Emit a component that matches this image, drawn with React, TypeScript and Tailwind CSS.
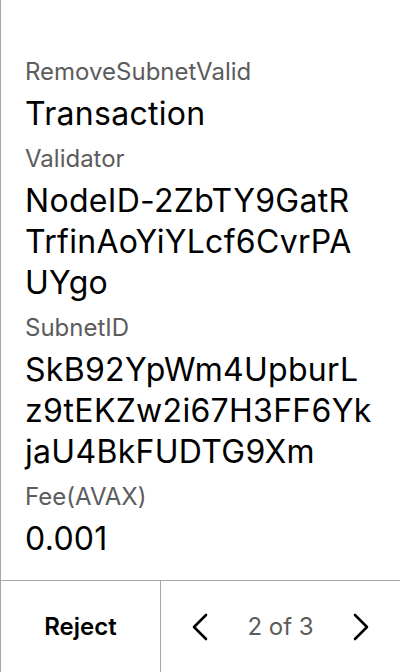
import React from "react";

const fields = [
    { label: "Validator", lines: ["NodeID-2ZbTY9GatR", "TrfinAoYiYLcf6CvrPA", "UYgo"] },
    { label: "SubnetID", lines: ["SkB92YpWm4UpburL", "z9tEKZw2i67H3FF6Yk", "jaU4BkFUDTG9Xm"] },
    { label: "Fee(AVAX)", lines: ["0.001"] },
];

function Chevron({ dir }: { dir: "left" | "right" }) {
    return (
        <svg width="16" height="28" viewBox="0 0 16 28" fill="none" stroke="black" strokeWidth="2.6" strokeLinecap="round" strokeLinejoin="round">
            {dir === "left" ? <polyline points="14,2 2,14 14,26" /> : <polyline points="2,2 14,14 2,26" />}
        </svg>
    );
}

export default function App() {
    return (
        <div className="h-[672px] w-[400px] flex flex-col bg-white border-l border-[#a6a6a6] font-['Inter',sans-serif]">
            <div className="flex-1 pl-6 pr-4 pt-[57px]">
                <div className="text-[24px] leading-[30px] text-[#5c5c5c]">RemoveSubnetValid</div>
                <div className="text-[32px] leading-[41px] tracking-[0.3px] text-black mt-[6px]">Transaction</div>
                {fields.map((f) => (
                    <div key={f.label} className="mt-[10px]">
                        <div className="text-[24px] leading-[30px] text-[#5c5c5c]">{f.label}</div>
                        <div className="mt-[6px]">
                            {f.lines.map((line) => (
                                <div key={line} className="text-[32px] leading-[41px] tracking-[0.3px] text-black whitespace-nowrap">
                                    {line}
                                </div>
                            ))}
                        </div>
                    </div>
                ))}
            </div>
            <div className="h-[92px] flex border-t border-[#a6a6a6]">
                <button className="w-[160px] border-r border-[#a6a6a6] text-[24px] font-semibold text-black">
                    Reject
                </button>
                <div className="flex-1 flex items-center justify-between pl-[31px] pr-[31px]">
                    <Chevron dir="left" />
                    <span className="text-[24px] text-[#5c5c5c]">2 of 3</span>
                    <Chevron dir="right" />
                </div>
            </div>
        </div>
    );
}
